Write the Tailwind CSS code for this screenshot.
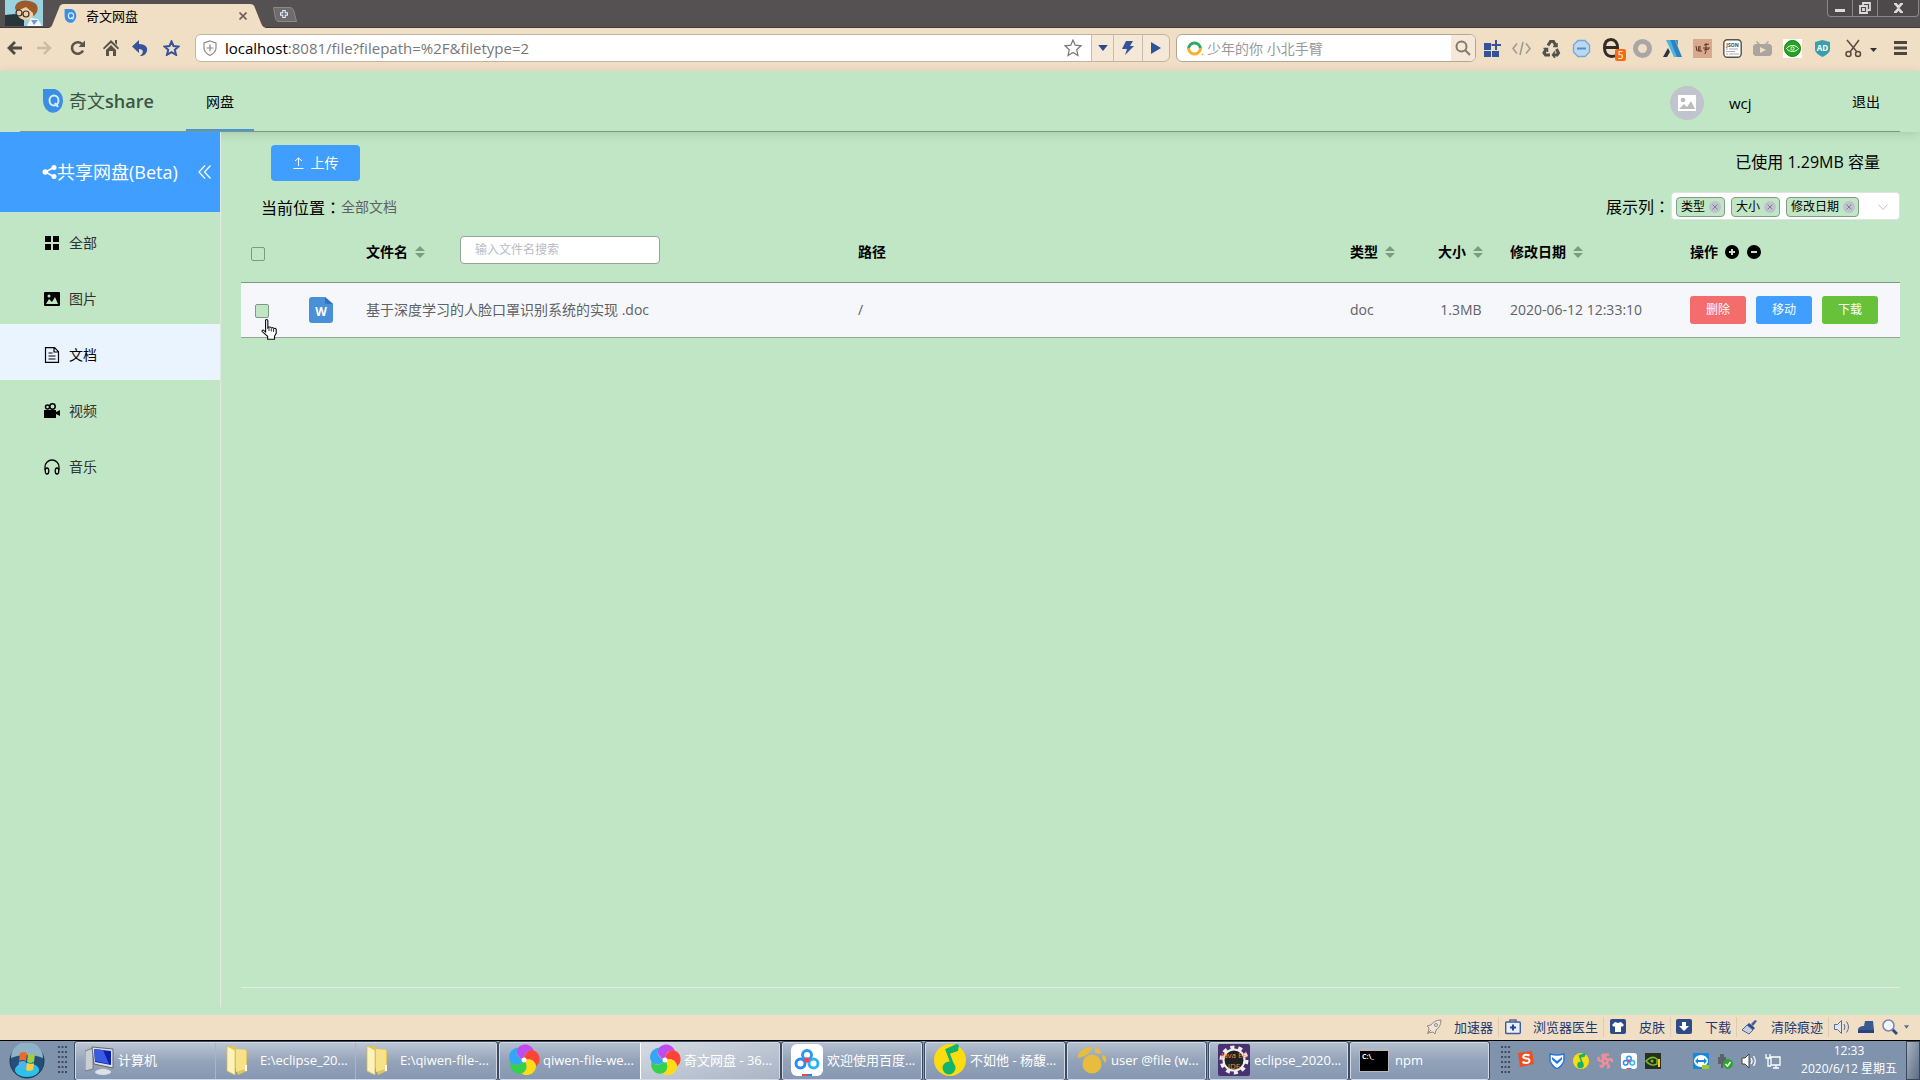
<!DOCTYPE html>
<html lang="zh-CN">
<head>
<meta charset="utf-8">
<title>奇文网盘</title>
<script src="https://cdn.jsdelivr.net/npm/@tailwindcss/browser@4"></script>
</head>
<body class="h-screen flex flex-col overflow-hidden bg-[#c1e6c5] font-['Open_Sans','Noto_Sans_CJK_SC',sans-serif] text-sm leading-5 text-black">

<svg class="hidden">
  <defs>
    <symbol id="pinwheel" viewBox="0 0 32 32">
      <path id="petal" d="M16 16C9 14 6 6 12 2c5-3.500 12-1 14 5-6-2-10 2-10 9z" fill="#c04cf0"/>
      <path d="M16 16C9 14 6 6 12 2c5-3.500 12-1 14 5-6-2-10 2-10 9z" fill="#ff4338" transform="rotate(72 16 16)"/>
      <path d="M16 16C9 14 6 6 12 2c5-3.500 12-1 14 5-6-2-10 2-10 9z" fill="#ffdc14" transform="rotate(144 16 16)"/>
      <path d="M16 16C9 14 6 6 12 2c5-3.500 12-1 14 5-6-2-10 2-10 9z" fill="#35d04c" transform="rotate(216 16 16)"/>
      <path d="M16 16C9 14 6 6 12 2c5-3.500 12-1 14 5-6-2-10 2-10 9z" fill="#34a6f5" transform="rotate(288 16 16)"/>
      <circle cx="16" cy="16" r="2.500" fill="#fff"/>
    </symbol>
    <symbol id="folder" viewBox="0 0 24 32">
      <path d="M2 2h8l2 3h8l2 2v20l-9 4z" fill="#e3c55c"/>
      <path d="M11 5l10 1v19l-10 3z" fill="#f6e28b"/>
      <path d="M2 2l8 4v25l-8-4z" fill="#fdf3b8" stroke="#d8b84c" stroke-width=".7"/>
      <path d="M21 21v6" stroke="#fff" stroke-width="2"/>
    </symbol>
    <symbol id="netdisk" viewBox="0 0 32 32">
      <rect width="32" height="32" rx="6" fill="#fff"/>
      <g fill="none" stroke-width="3"><circle cx="9.500" cy="19.500" r="4.500" stroke="#2a8bf0"/><circle cx="22.500" cy="19.500" r="4.500" stroke="#2fb4f5"/><circle cx="16" cy="11" r="4.500" stroke="#2a9bf0"/></g>
      <circle cx="16" cy="16" r="2.800" fill="#f0465a"/>
      <path d="M11 30h5v2h-5z" fill="#e8485c"/><path d="M16 30h5v2h-5z" fill="#2d7ff0"/>
    </symbol>
    <symbol id="music" viewBox="0 0 32 32">
      <circle cx="16" cy="16" r="16" fill="#fbdc10"/>
      <path d="M24 1l-11 5 6 16" fill="none" stroke="#12b36c" stroke-width="3"/><path d="M25 1l-1 6-9 3-2-5z" fill="#12b36c"/>
      <circle cx="15" cy="24" r="6.500" fill="#12b36c"/>
    </symbol>
    <symbol id="sort" viewBox="0 0 10 12"><path d="M5 0l5 5H0zM5 12l5-5H0z" fill="#7a9d82"/></symbol>
    <symbol id="qlogo" viewBox="0 0 22 24">
      <path d="M0 0h12a10 12 0 1 1-12 12z" fill="#3a8ee6"/>
      <ellipse cx="11" cy="11.500" rx="4.500" ry="5" fill="none" stroke="#d8ecfb" stroke-width="2"/><path d="M12 14l3 4" stroke="#d8ecfb" stroke-width="2"/>
    </symbol>
    <symbol id="grip" viewBox="0 0 9 32">
      <g stroke="#3f4c60" stroke-width="2" stroke-dasharray="2 3"><path d="M1 1v30M4.500 1v30M8 1v30"/></g>
    </symbol>
  </defs>
</svg>

<!-- Browser tab strip -->
<header class="h-7 shrink-0 bg-[#555152] border-b border-[#3f3b3a] flex items-start justify-between">
  <div class="flex items-start h-full">
    <svg class="w-[38px] h-[26px] ml-[5px]" viewBox="0 0 38 26">
      <rect width="38" height="26" fill="#9bd2df"/><path d="M0 26V15l10-1 9 6v6z" fill="#26363a"/>
      <path d="M10 8c0-6 8-9 14-7 7 1 10 5 8 11l-3 4-8-7-9 4z" fill="#9a5a2a"/>
      <path d="M12 11l9-4 7 6c0 4-2 7-7 7-6 0-9-4-9-9z" fill="#f3cfa6"/>
      <g fill="none" stroke="#333" stroke-width="1.200"><circle cx="14" cy="13" r="3"/><circle cx="21" cy="14" r="3"/></g>
      <path d="M22 26l4-8 7 1 4 7z" fill="#f3f7fb"/><path d="M26 20l3 5 4-5z" fill="#6c9ad4"/>
    </svg>
    <div class="relative h-6 w-[224px] mt-1 ml-[4px]">
      <svg class="absolute inset-0 w-full h-full" viewBox="0 0 224 24" preserveAspectRatio="none"><path d="M0 24c4 0 5-2 6-5l6-15c1-3 2-4 5-4h186c3 0 4 1 5 4l6 15c1 3 3 5 7 5z" fill="#f0dec5"/></svg>
      <div class="relative flex items-center h-full pl-[17px] pr-[24px]">
        <svg class="w-[14px] h-[14px]"><use href="#qlogo"/></svg>
        <span class="ml-2 text-[13px] flex-1">奇文网盘</span>
        <button aria-label="关闭标签页"><svg class="w-2 h-2" viewBox="0 0 8 8"><path d="M.5.5l7 7M7.500.5l-7 7" stroke="#6f6359" stroke-width="1.700"/></svg></button>
      </div>
    </div>
    <button aria-label="新标签页" class="mt-[7px] ml-px"><svg class="w-[25px] h-[15px]" viewBox="0 0 25 15"><path d="M1.500.5H17c3 0 4 1 5 4l2.500 10H7c-2 0-3-1-3.500-3z" fill="#6f6c6d" stroke="#8c898a"/><path d="M12 3v8M8 7h8" stroke="#e8eaf0" stroke-width="3.500"/><path d="M12 4v6M9 7h6" stroke="#4a5a78" stroke-width="1.200"/></svg></button>
  </div>
  <div class="flex h-[17px] mr-px border border-t-0 border-[#8b8788] rounded-b text-[#dcdada] bg-[#4d494a]">
    <button aria-label="最小化" class="w-6 flex justify-center items-center"><svg class="w-3 h-3" viewBox="0 0 12 12"><path d="M1 7h10v3H1z" fill="currentColor"/></svg></button>
    <button aria-label="还原" class="w-[26px] flex justify-center items-center border-x border-[#8b8788]"><svg class="w-3 h-3" viewBox="0 0 12 12" fill="none" stroke="currentColor" stroke-width="1.800"><path d="M4 3V1h7v7H9"/><path d="M1 4h7v7H1zM4 7h1v1H4z"/></svg></button>
    <button aria-label="关闭" class="w-10 flex justify-center items-center"><svg class="w-[11px] h-[10px]" viewBox="0 0 11 10"><path d="M1 .8h2.300l2.200 2.700L7.700.8H10M1 9.200h2.300l2.200-2.700 2.200 2.700H10M2 1l7 8M9 1L2 9" stroke="currentColor" stroke-width="1.600" fill="none"/></svg></button>
  </div>
</header>

<!-- Browser toolbar -->
<nav class="h-[43px] shrink-0 bg-[#f0dec5] flex items-center pb-[3px] pl-[7px] pr-[13px]" aria-label="浏览器工具栏">
  <div class="flex items-center w-[188px] shrink-0 text-[#5a534c]">
    <button aria-label="后退" class="w-[29px]"><svg class="w-4 h-4" viewBox="0 0 16 16" fill="none" stroke="#4e4a45" stroke-width="2.800"><path d="M8 2L2 8l6 6M2 8h13"/></svg></button>
    <button aria-label="前进" class="w-[34px]"><svg class="w-4 h-4" viewBox="0 0 16 16" fill="none" stroke="#cbbba5" stroke-width="2.400"><path d="M8 2l6 6-6 6M14 8H1"/></svg></button>
    <button aria-label="刷新" class="w-[33px]"><svg class="w-4 h-4" viewBox="0 0 16 16"><path d="M13 10.500A5.800 5.800 0 1 1 12 4" fill="none" stroke="currentColor" stroke-width="2.600"/><path d="M15 .5V7H8.500z" fill="currentColor"/></svg></button>
    <button aria-label="主页" class="w-[29px]"><svg class="w-4 h-4" viewBox="0 0 16 16" fill="currentColor"><path d="M8 0l8 8-1 1.500L8 3 1 9.500 0 8zM12 0h2v5l-2-2zM8 5l5 5v6h-3v-5H6v5H3v-6z"/></svg></button>
    <button aria-label="恢复" class="w-[31px]"><svg class="w-4 h-4" viewBox="0 0 16 16"><path d="M7 0v4c6 0 9 3 8 7-1 3-3 5-7 5 4-3 4-7-1-7v4L0 6.500z" fill="#34539a"/></svg></button>
    <button aria-label="收藏"><svg class="w-[17px] h-4" viewBox="0 0 17 16"><path d="M8.500 1.500l2 4.500 5 .5-3.700 3.300 1.200 5-4.500-2.600L4 14.800l1.200-5L1.500 6.500l5-.5z" fill="none" stroke="#34539a" stroke-width="2"/></svg></button>
  </div>
  <div class="flex flex-1 h-7 border border-[#c0b3a2] rounded-md overflow-hidden bg-[#f5e8d7]">
    <div class="flex flex-1 items-center bg-white pl-[7px] pr-[9px]">
      <svg class="w-[14px] h-4 mr-2 shrink-0" viewBox="0 0 14 16" fill="none" stroke="#8a8a8a" stroke-width="1.200"><path d="M7 1l6 2v5c0 4-3 6-6 7.500C4 14 1 12 1 8V3zM7 4.500v7M3.500 8h7"/></svg>
      <div class="relative flex-1 h-6 text-[15px]">
        <input aria-label="地址" value="localhost:8081/file?filepath=%2F&amp;filetype=2" class="block w-full h-6 text-[#777] outline-none">
        <span aria-hidden="true" class="absolute left-0 top-0 leading-6 bg-white text-black">localhost</span>
      </div>
      <button aria-label="收藏此页"><svg class="w-[18px] h-[18px]" viewBox="0 0 18 18"><path d="M9 1l2.200 5.200 5.800.6-4.300 3.900 1.300 5.900L9 13.500l-5 3.100 1.300-5.900L1 6.800l5.800-.6z" fill="none" stroke="#777" stroke-width="1.200"/></svg></button>
    </div>
    <button aria-label="历史地址" class="w-[22px] flex items-center justify-center border-l border-[#c9bcab]"><svg class="w-[10px] h-1.5" viewBox="0 0 8 5"><path d="M0 0h8L4 5z" fill="#2b4a86"/></svg></button>
    <button aria-label="极速模式" class="w-[29px] flex items-center justify-center border-l border-[#c9bcab]"><svg class="w-3 h-[14px]" viewBox="0 0 12 14"><path d="M4 0h7L8 5h4L3 14l2-6H0z" fill="#34539a"/></svg></button>
    <button aria-label="转到" class="w-[27px] flex items-center justify-center border-l border-[#c9bcab]"><svg class="w-[10px] h-3" viewBox="0 0 10 12"><path d="M0 0l10 6-10 6z" fill="#2d5599"/></svg></button>
  </div>
  <div class="flex w-[300px] h-7 ml-[6px] border border-[#b3a696] rounded-md overflow-hidden bg-white shrink-0">
    <div class="flex items-center flex-1 pl-[10px]">
      <svg class="w-[17px] h-[15px] mr-[3px]" viewBox="0 0 17 15" fill="none" stroke-width="3"><path d="M1.500 8a6 6 0 0 1 12 0" stroke="#31a862"/><path d="M13.500 7a6 6 0 0 1-12 0" stroke="#f1b32b"/><circle cx="15.500" cy="13.500" r="1" fill="#f1b32b" stroke="none"/></svg>
      <input aria-label="搜索" placeholder="少年的你 小北手臂" class="flex-1 min-w-0 h-6 text-[14px] placeholder:text-[#999] outline-none">
    </div>
    <button aria-label="开始搜索" class="w-6 flex items-center justify-center bg-[#f5e8d7]"><svg class="w-4 h-4" viewBox="0 0 16 16" fill="none" stroke="#85786c" stroke-width="2"><circle cx="6.500" cy="6.500" r="5"/><path d="M10 10l5 5"/></svg></button>
  </div>
  <div class="flex items-center gap-[11px] ml-[6px] shrink-0">
    <svg class="w-[19px] h-[19px]" viewBox="0 0 19 19" fill="#34539a"><path d="M2 4h7v7H2zM2 12h7v6H2zM10 12h7v6h-7zM13 1h2v4h4v2h-4v4h-2V7H9.500V5H13z"/></svg>
    <svg class="w-[19px] h-[19px]" viewBox="0 0 19 19" fill="none" stroke="#a39a92" stroke-width="1.600"><path d="M5 4.500l-4 5 4 5M14 4.500l4 5-4 5M11 3L8 16"/></svg>
    <svg class="w-[19px] h-[19px]" viewBox="0 0 19 19" fill="none" stroke="#50504e" stroke-width="3"><path d="M6 6.500l2.500-4h3L14 7M14.500 10l2 4-1.500 2h-4M8 16H3.500L2 14l2.500-4.500"/><path d="M11 7.500h4V4M13 12.500L10.500 16l2.500 3M1.500 9.500h4v3.500" stroke-width="1.500"/></svg>
    <svg class="w-[19px] h-[19px]" viewBox="0 0 19 19"><path d="M6 1.500h7l4.500 4.500v7L13 17.500H6L1.500 13V6z" fill="#bcd8f0" stroke="#70a9dd" stroke-width="1.300"/><path d="M5 9.500h9" stroke="#4d90d0" stroke-width="2"/></svg>
    <div class="relative w-[20px] h-[20px]">
      <svg class="w-[18px] h-[20px]" viewBox="0 0 18 20"><path d="M2.500 9.500h13c0-5-2.500-8-6.500-8s-6.500 3-6.500 8.500 3 8.500 7 8.500 5-1 6-2" fill="none" stroke="#312a25" stroke-width="3"/></svg>
      <span class="absolute -right-1 top-[11px] w-[11px] h-3 rounded-xs bg-[#f56c10] text-white text-[10px] leading-3 text-center">5</span>
    </div>
    <svg class="w-[19px] h-[19px]" viewBox="0 0 19 19"><circle cx="9.500" cy="9.500" r="7" fill="none" stroke="#a9a7a5" stroke-width="5"/></svg>
    <svg class="w-[19px] h-[19px]" viewBox="0 0 19 19"><path d="M3 1h4l8 17h-4z" fill="#49b4e6"/><path d="M7 1h5l7 17h-5z" fill="#2f83bd"/><path d="M12 1h3v6z" fill="#3597cf"/><path d="M5 9l2 4-3 5H0z" fill="#2b3440"/></svg>
    <svg class="w-[19px] h-[19px]" viewBox="0 0 19 19"><rect width="19" height="19" fill="#d8a98c"/><path d="M3 7l1 5M6 7l-1 5h4M7 7v5M11 6l5-1M10 9h7M13 4v8l-1 3M11 11l5-1" stroke="#5c3527" fill="none"/></svg>
    <svg class="w-[19px] h-[19px]" viewBox="0 0 19 19"><rect x=".8" y=".8" width="17.400" height="17.400" rx="3.500" fill="#fff" stroke="#55524f" stroke-width="1.400"/><text x="9.500" y="7.500" font-size="5" font-weight="700" text-anchor="middle" fill="#444">JSON</text><path d="M3 10h2m1 0h9M3 12.500h9M3 15h2m1 0h10" stroke="#aaa"/></svg>
    <svg class="w-[19px] h-[19px]" viewBox="0 0 19 19"><path d="M4 2l3 3h5l3-3 1 1-2 2h3l2 2v8l-2 2H2l-2-2V7l2-2h3L3 3z" fill="#a9a5a0"/><path d="M7 8l6 3-6 3z" fill="#f0dec5"/></svg>
    <svg class="w-[19px] h-[19px]" viewBox="0 0 19 19"><rect width="19" height="19" fill="#fff"/><circle cx="9.500" cy="9.500" r="8" fill="#24a51f" stroke="#157a12"/><path d="M3.500 9.500c3-4 9-4 12 0-3 4-9 4-12 0z" fill="none" stroke="#fff"/><circle cx="9.500" cy="9.500" r="1.600" fill="none" stroke="#fff"/></svg>
    <svg class="w-[19px] h-[19px]" viewBox="0 0 19 19"><path d="M9.500 1l7.500 2v7c0 4-4 6-7.500 8C6 16 2 14 2 10V3z" fill="#38a0a8"/><text x="9.500" y="12" font-size="8" font-weight="700" text-anchor="middle" fill="#fff">AD</text></svg>
    <svg class="w-[19px] h-[19px] ml-px" viewBox="0 0 19 19" fill="none" stroke="#5a4a40" stroke-width="1.500"><path d="M3 1l10 12M15 1L6 13"/><circle cx="4.500" cy="15" r="2.500"/><circle cx="14" cy="15" r="2.500"/></svg>
    <svg class="w-[7px] h-1 mt-1 -ml-1" viewBox="0 0 7 4"><path d="M0 0h7L3.500 4z" fill="#333"/></svg>
    <button aria-label="菜单" class="ml-[6px]"><svg class="w-[13px] h-[14px]" viewBox="0 0 13 14"><path d="M0 1.500h13M0 7h13M0 12.500h13" stroke="#4b4641" stroke-width="3"/></svg></button>
  </div>
</nav>

<!-- Application header -->
<header class="relative z-10 shrink-0 h-[61px] px-5 shadow-[0_2px_10px_rgba(0,0,0,0.12)]">
  <div class="h-full border-b border-[#7a9a82] flex items-start justify-between pl-[23px] pr-5">
    <div class="flex h-full">
      <a href="#" class="flex items-center w-[143px] text-lg text-[#3c5544]">
        <svg class="w-[22px] h-6 mr-1"><use href="#qlogo"/></svg><span>奇文</span><span class="font-semibold">share</span>
      </a>
      <a href="#" class="h-[60px] w-[68px] pt-[21px] text-center border-b-2 border-[#4a94d8]">网盘</a>
    </div>
    <div class="flex items-center h-16">
      <svg class="w-[34px] h-[34px]" viewBox="0 0 34 34"><circle cx="17" cy="17" r="17" fill="#c0c4cc"/><rect x="8" y="9" width="18" height="16" fill="#fff"/><circle cx="13" cy="14" r="2.300" fill="#bbb"/><path d="M9 23l5-5 3 3 4-6 4 8z" fill="#bbb"/></svg>
      <span class="ml-[25px] w-[123px] text-[15px]">wcj</span>
      <a href="#" class="pb-0.5">退出</a>
    </div>
  </div>
</header>

<div class="flex flex-1 min-h-0">
  <!-- Category menu -->
  <aside class="relative z-20 w-[221px] shrink-0 mb-2 border-r border-[#e3eae3] bg-[#c1e6c5] text-[#303133]">
    <div class="h-20 bg-[#409eff] text-white text-lg flex items-center pl-[42px]">
      <svg class="w-[15px] h-[14px] shrink-0" viewBox="0 0 14 14"><path d="M12 2L3 7l9 5" fill="none" stroke="#fff" stroke-width="1.500"/><g fill="#fff"><circle cx="11.500" cy="2.500" r="2.500"/><circle cx="2.800" cy="7" r="2.800"/><circle cx="11.500" cy="11.500" r="2.500"/></g></svg>
      <span class="flex-1 whitespace-nowrap">共享网盘(Beta)</span>
      <button aria-label="收起" class="mr-[9px]"><svg class="w-[13px] h-[14px]" viewBox="0 0 13 14" fill="none" stroke="#fff" stroke-width="1.200"><path d="M7 .5L1 7l6 6.500M12.500.5l-6 6.500 6 6.500"/></svg></button>
    </div>
    <ul>
      <li><a href="#" class="flex items-center h-14 pl-11 pt-[5px] gap-[9px]"><svg class="w-4 h-4" viewBox="0 0 16 16"><path d="M1 1h6v6H1zM9 1h6v6H9zM1 9h6v6H1zM9 9h6v6H9z" fill="#000"/></svg>全部</a></li>
      <li><a href="#" class="flex items-center h-14 pl-11 pt-[5px] gap-[9px]"><svg class="w-4 h-4" viewBox="0 0 16 16"><rect y="1" width="16" height="14" rx="1" fill="#000"/><path d="M2 13l3-5 3 3 3-5 3 7z" fill="#c1e6c5"/><circle cx="5" cy="5" r="1.500" fill="#c1e6c5"/></svg>图片</a></li>
      <li><a href="#" class="flex items-center h-14 pl-11 pt-[5px] gap-[9px] bg-[#eaf4ff] text-black"><svg class="w-4 h-4" viewBox="0 0 16 16" fill="none" stroke="#000" stroke-width="1.200"><path d="M1.500.7h9l4 4v10.600h-13zM10 1v4h4M4.500 6h4M4.500 9h7M4.500 12h7"/></svg>文档</a></li>
      <li><a href="#" class="flex items-center h-14 pl-11 pt-[5px] gap-[9px]"><svg class="w-4 h-4" viewBox="0 0 16 16"><path d="M0 7h12v2l4-2v6l-4-2v4H0z" fill="#000"/><circle cx="3.500" cy="4" r="2" fill="none" stroke="#000" stroke-width="1.500"/><circle cx="8.500" cy="3.500" r="2.700" fill="none" stroke="#000" stroke-width="1.500"/></svg>视频</a></li>
      <li><a href="#" class="flex items-center h-14 pl-11 pt-[5px] gap-[9px]"><svg class="w-4 h-4" viewBox="0 0 16 16" fill="none" stroke="#000" stroke-width="1.300"><path d="M1 11V8a7 7 0 0 1 14 0v3"/><ellipse cx="3" cy="12" rx="1.800" ry="3"/><ellipse cx="13" cy="12" rx="1.800" ry="3"/></svg>音乐</a></li>
    </ul>
  </aside>

  <!-- File list -->
  <main class="flex-1 min-w-0 flex flex-col pl-5 pr-5 pb-[27px]">
    <div class="flex items-center justify-between pt-[13px] pl-[30px] pr-5">
      <button class="h-9 w-[89px] rounded bg-[#409eff] text-white flex items-center justify-center gap-[7px]"><svg class="w-[11px] h-3" viewBox="0 0 11 12" fill="none" stroke="#fff"><path d="M5.500 9V1M2 4l3.500-3L9 4M.5 11.500h10"/></svg>上传</button>
      <span class="text-base leading-5 pb-0.5">已使用 1.29MB 容量</span>
    </div>
    <div class="flex items-center justify-between h-7 mt-[11px] pl-5">
      <div class="flex items-center pt-0.5"><span class="text-base leading-5">当前位置<span class="font-['Noto_Sans_CJK_TC',sans-serif]" lang="zh-TW">：</span></span><a href="#" class="text-[#606266]">全部文档</a></div>
      <div class="flex items-center">
        <span class="text-base leading-5 mr-px">展示列<span class="font-['Noto_Sans_CJK_TC',sans-serif]" lang="zh-TW">：</span></span>
        <div class="flex items-center gap-[6px] w-[229px] h-7 rounded border border-[#e0e4e0] bg-white pl-1 pt-px text-xs" role="group" aria-label="展示列">
          <span class="flex items-center h-5 border border-[#7d9f85] rounded bg-[#c1e6c5] pl-1 pr-[3px] gap-1">类型<button aria-label="移除类型" class="w-3 h-3 rounded-full bg-[#bfc3cb] flex items-center justify-center"><svg class="w-1.5 h-1.5" viewBox="0 0 6 6" stroke="#7d7f92"><path d="M.5.5l5 5M5.500.5l-5 5"/></svg></button></span>
          <span class="flex items-center h-5 border border-[#7d9f85] rounded bg-[#c1e6c5] pl-1 pr-[3px] gap-1">大小<button aria-label="移除大小" class="w-3 h-3 rounded-full bg-[#bfc3cb] flex items-center justify-center"><svg class="w-1.5 h-1.5" viewBox="0 0 6 6" stroke="#7d7f92"><path d="M.5.5l5 5M5.500.5l-5 5"/></svg></button></span>
          <span class="flex items-center h-5 border border-[#7d9f85] rounded bg-[#c1e6c5] pl-1 pr-[3px] gap-1">修改日期<button aria-label="移除修改日期" class="w-3 h-3 rounded-full bg-[#bfc3cb] flex items-center justify-center"><svg class="w-1.5 h-1.5" viewBox="0 0 6 6" stroke="#7d7f92"><path d="M.5.5l5 5M5.500.5l-5 5"/></svg></button></span>
          <button aria-label="展开" class="ml-auto mr-[11px]"><svg class="w-[10px] h-[6px]" viewBox="0 0 10 6" fill="none" stroke="#c0c4cc"><path d="M.5.5L5 5.500 9.500.5"/></svg></button>
        </div>
      </div>
    </div>
    <div class="flex-1 border-b border-[#e3ebe3] pt-[2px]">
      <table class="w-full table-fixed text-left border-collapse">
        <colgroup><col class="w-[50px]"><col class="w-[65px]"><col><col><col class="w-[88px]"><col class="w-[72px]"><col class="w-[180px]"><col class="w-[220px]"></colgroup>
        <thead>
          <tr class="h-[60px] font-bold border-b border-[#7a9a82]">
            <th class="pl-[10px]"><input type="checkbox" aria-label="全选" class="block appearance-none w-[14px] h-[14px] mt-1 border border-[#7a9a82] rounded-xs"></th>
            <th></th>
            <th class="pl-[10px]"><div class="flex items-center"><button class="flex items-center gap-[7px] font-bold">文件名<svg class="w-[10px] h-3"><use href="#sort"/></svg></button><input aria-label="搜索文件名" placeholder="输入文件名搜索" class="ml-[35px] mb-1 w-[200px] h-7 px-[14px] rounded border border-[#93a596] bg-white text-xs font-normal placeholder:text-[#b9bcc4]"></div></th>
            <th class="pl-[10px]">路径</th>
            <th class="pl-[10px]"><button class="flex items-center gap-[7px] font-bold">类型<svg class="w-[10px] h-3"><use href="#sort"/></svg></button></th>
            <th class="pl-[10px]"><button class="flex items-center gap-[7px] font-bold">大小<svg class="w-[10px] h-3"><use href="#sort"/></svg></button></th>
            <th class="pl-[10px]"><button class="flex items-center gap-[7px] font-bold">修改日期<svg class="w-[10px] h-3"><use href="#sort"/></svg></button></th>
            <th class="pl-[10px]"><div class="flex items-center gap-2"><span class="-mr-px">操作</span>
              <button aria-label="展开操作列"><svg class="w-[14px] h-[14px] block" viewBox="0 0 14 14"><circle cx="7" cy="7" r="7"/><path d="M7 4v6M4 7h6" stroke="#c1e6c5" stroke-width="2"/></svg></button>
              <button aria-label="收起操作列"><svg class="w-[14px] h-[14px] block" viewBox="0 0 14 14"><circle cx="7" cy="7" r="7"/><path d="M4 7h6" stroke="#c1e6c5" stroke-width="2"/></svg></button></div></th>
          </tr>
        </thead>
        <tbody>
          <tr class="h-[55px] bg-[#f5f7fa] border-b border-[#98a39b] text-[#606266]">
            <td class="pl-[14px] relative">
              <input type="checkbox" aria-label="选择文件" class="block appearance-none w-[14px] h-[14px] mt-[2px] border border-[#7a9a82] rounded-xs bg-[#c1e6c5]">
              <svg class="absolute left-[20px] top-[36px] w-4 h-[22px] z-10" viewBox="0 0 14 22" preserveAspectRatio="none"><path d="M4 1c1-1 2 0 2 1v7l1-1 1 0 1 1 1-.5 1.500 1 1-.2.8 1v4l-1.500 3v3h-6v-3L1 12.500c-.5-1.500 1-2 2-.5l1 1z" fill="#fff" stroke="#111" stroke-width="1"/><path d="M7 9v3M9 9.500v3M11 10v3" stroke="#111" stroke-width=".8"/></svg>
            </td>
            <td class="pl-[18px]"><svg class="w-6 h-[26px]" viewBox="0 0 24 26"><path d="M3 0h13l8 7v16c0 2-1 3-3 3H3c-2 0-3-1-3-3V3c0-2 1-3 3-3z" fill="#4a90d9"/><path d="M16 0l8 7h-6c-1 0-2-1-2-2z" fill="#2f72bd"/><text x="12" y="19" font-size="12" font-weight="700" text-anchor="middle" fill="#fff">W</text></svg></td>
            <td class="pl-[10px] whitespace-nowrap">基于深度学习的人脸口罩识别系统的实现 .doc</td>
            <td class="pl-[10px]">/</td>
            <td class="pl-[10px]">doc</td>
            <td class="text-center pr-[6px]">1.3MB</td>
            <td class="pl-[10px] whitespace-nowrap">2020-06-12 12:33:10</td>
            <td class="pl-[10px]"><div class="flex gap-[10px] text-xs text-white"><button class="w-14 h-7 rounded-[3px] bg-[#f56c6c]">删除</button><button class="w-14 h-7 rounded-[3px] bg-[#409eff]">移动</button><button class="w-14 h-7 rounded-[3px] bg-[#67c23a]">下载</button></div></td>
          </tr>
        </tbody>
      </table>
    </div>
  </main>
</div>

<!-- Browser status bar -->
<footer class="h-[25px] shrink-0 bg-[#f0dec5] flex items-center justify-end pr-[11px] pb-0.5 text-[13px] text-[#1c3874]">
  <button class="flex items-center gap-3 pr-[5px] mr-[6px] border-r border-[#ddccb5]"><svg class="w-4 h-4" viewBox="0 0 16 16" fill="#eee6dc" stroke="#95897c"><path d="M15 1c-5 0-8 2-10 5L1 7l2 2-1 5 5-1 2 2 1-4c3-2 5-5 5-10zM1 15l4-4"/><circle cx="10" cy="6" r="1.500"/></svg>加速器</button>
  <button class="flex items-center gap-3 pr-[5px] mr-[6px] border-r border-[#ddccb5]"><svg class="w-4 h-4" viewBox="0 0 16 16"><path d="M5 3V1h6v2" fill="none" stroke="#5a6a8c" stroke-width="1.500"/><rect x=".7" y="3" width="14.600" height="11.500" rx="1" fill="#e8eefb" stroke="#3f5a94" stroke-width="1.400"/><path d="M8 5.500v6M5 8.500h6" stroke="#24468f" stroke-width="2"/></svg>浏览器医生</button>
  <button class="flex items-center gap-[13px] pr-[5px] mr-[5px] border-r border-[#ddccb5]"><svg class="w-4 h-4" viewBox="0 0 16 16"><rect width="16" height="15" rx="2" fill="#2d4b86"/><path d="M5 3l3 1 3-1 3 3-2 2-1-1v6H5V7L4 8 2 6z" fill="#fff"/></svg>皮肤</button>
  <button class="flex items-center gap-[13px] pr-[5px] mr-[5px] border-r border-[#ddccb5]"><svg class="w-4 h-4" viewBox="0 0 16 16"><rect width="16" height="15" rx="2" fill="#2d4b86"/><path d="M6 3h4v4h3l-5 5-5-5h3z" fill="#fff"/></svg>下载</button>
  <button class="flex items-center gap-[13px] pr-[5px] mr-[5px] border-r border-[#ddccb5]"><svg class="w-4 h-4" viewBox="0 0 16 16"><path d="M9 5l4-4 2 1-4 5z" fill="#3f5f9c"/><path d="M7 4l6 5-2 2-6-5z" fill="#2d4b86"/><path d="M5 6l6 5-4 4-7-4z" fill="#c8d0e0" stroke="#4a6496"/></svg>清除痕迹</button>
  <div class="flex items-center gap-2">
    <svg class="w-4 h-[14px]" viewBox="0 0 16 14" fill="#dfe6f2" stroke="#5a6c92"><path d="M.5 4.500h3l4-4v13l-4-4h-3z"/><path d="M10 4q2 3 0 6M12.500 1.500q4 5.500 0 11" fill="none"/></svg>
    <svg class="w-4 h-3" viewBox="0 0 16 12"><path d="M7 0h8l1 9H0c0-3 3-4 6-4z" fill="#3c5891"/><path d="M0 9h16v3H0z" fill="#27427c"/></svg>
    <svg class="w-4 h-4" viewBox="0 0 16 16"><path d="M10 10l5 5" stroke="#2d4b86" stroke-width="3"/><circle cx="6.500" cy="6.500" r="5.500" fill="#f2f7ff" stroke="#7788a8" stroke-width="1.500"/></svg>
    <svg class="w-[5px] h-1 -ml-0.5" viewBox="0 0 6 4"><path d="M0 0h6L3 4z" fill="#5a6c92"/></svg>
  </div>
</footer>

<!-- Desktop taskbar -->
<footer class="h-10 shrink-0 bg-[#8093ac] border-t border-black flex items-center text-[13px] text-white">
  <button aria-label="开始" class="ml-[9px] mr-[13px] shrink-0"><svg class="w-9 h-9 block" viewBox="0 0 36 36"><circle cx="18" cy="18" r="17" fill="#244f78" stroke="#1e3450"/><ellipse cx="18" cy="27" rx="12" ry="7" fill="#2cc0ea"/><path d="M2 15a16 16 0 0 1 32 0c-9-4-23-4-32 0z" fill="#8fb2c6"/><path d="M11 10q4-2 7 0l-1 8q-4-2-7 0z" fill="#ee6a2c"/><path d="M19 11q4 2 7 0l-1 8q-4 2-7 0z" fill="#9ccf42"/><path d="M10 19q4-2 7 0l-1 7q-4-2-7 0z" fill="#4fb4ee"/><path d="M18 20q4 2 7 0l-1 7q-4 2-7 0z" fill="#fbce3e"/></svg></button>
  <svg class="w-[9px] h-8 mr-2 shrink-0"><use href="#grip"/></svg>

  <div class="flex h-[38px] border border-[#d3dae4] rounded-xs bg-linear-to-b from-[#bcc6d4] via-[#95a4ba] to-[#8597b2] outline outline-[#3d4b60]">
    <button class="w-[140px] flex items-center pl-[9px] pb-0.5 border-r border-[#a9b5c6]"><svg class="w-[30px] h-8 mr-[3px]" viewBox="0 0 30 32"><path d="M0 7l8-3v21l-8 2z" fill="#c9ced3" stroke="#555" stroke-width=".6"/><path d="M7 3l21 2v19L9 20z" fill="#dde3e8" stroke="#666"/><path d="M9 5l17 2v14l-16-3z" fill="#0b1fb4"/><path d="M9 5l9 1 6 14-14-3z" fill="#3a5be0"/><path d="M16 23l5 1v3l-6-1z" fill="#aaa"/><ellipse cx="18" cy="28" rx="8" ry="3" fill="#dfe2e5"/></svg><span>计算机</span></button>
    <button class="w-[140px] flex items-center pl-[9px] pb-0.5 border-r border-[#a9b5c6]"><svg class="w-6 h-8 mr-[11px] shrink-0"><use href="#folder"/></svg><span>E:\eclipse_20...</span></button>
    <button class="w-[140px] flex items-center pl-[9px] pb-0.5"><svg class="w-6 h-8 mr-[11px] shrink-0"><use href="#folder"/></svg><span>E:\qiwen-file-...</span></button>
  </div>
  <div class="flex h-[38px] ml-[2px] border border-[#d3dae4] rounded-xs bg-linear-to-b from-[#b4bfce] via-[#93a2b9] to-[#8597b2] outline outline-[#3d4b60]">
    <button class="w-[140px] flex items-center pl-2 pb-0.5 whitespace-nowrap"><svg class="w-8 h-8 mr-[3px] shrink-0"><use href="#pinwheel"/></svg><span>qiwen-file-we...</span></button>
    <button class="w-[139px] flex items-center pl-2 pb-0.5 whitespace-nowrap bg-linear-to-br from-[#d5dbe3] to-[#a9b4c5] border-l border-white"><svg class="w-8 h-8 mr-[3px] shrink-0"><use href="#pinwheel"/></svg><span>奇文网盘 - 36...</span></button>
  </div>
  <button class="w-[140px] h-[38px] ml-[2px] flex items-center pl-2 pb-0.5 whitespace-nowrap border border-[#d3dae4] rounded-xs bg-linear-to-b from-[#b4bfce] via-[#93a2b9] to-[#8597b2] outline outline-[#3d4b60]"><svg class="w-8 h-8 mr-1 shrink-0"><use href="#netdisk"/></svg><span>欢迎使用百度...</span></button>
  <button class="w-[140px] h-[38px] ml-[3px] flex items-center pl-2 pb-0.5 whitespace-nowrap border border-[#d3dae4] rounded-xs bg-linear-to-b from-[#b4bfce] via-[#93a2b9] to-[#8597b2] outline outline-[#3d4b60]"><svg class="w-8 h-8 mr-1 shrink-0"><use href="#music"/></svg><span>不如他 - 杨馥...</span></button>
  <button class="w-[139px] h-[38px] ml-[2px] flex items-center pl-[9px] pb-0.5 whitespace-nowrap border border-[#d3dae4] rounded-xs bg-linear-to-b from-[#b4bfce] via-[#93a2b9] to-[#8597b2] outline outline-[#3d4b60]"><svg class="w-[30px] h-7 mr-1 shrink-0" viewBox="0 0 30 28" fill="#e8bc3c"><circle cx="15" cy="18" r="9.500"/><path d="M1 12C0 6 8 0 15 1c-1 6-6 9-14 11zM18 1c4 0 6 4 6 7l-6-1zM26 9c4 1 4 6 2 8l-3-5z"/></svg><span>user @file (w...</span></button>
  <button class="w-[139px] h-[38px] ml-[3px] flex items-center pl-2 pb-0.5 whitespace-nowrap border border-[#d3dae4] rounded-xs bg-linear-to-b from-[#b4bfce] via-[#93a2b9] to-[#8597b2] outline outline-[#3d4b60]"><svg class="w-8 h-8 mr-1 shrink-0" viewBox="0 0 32 32"><rect width="32" height="32" rx="2" fill="#49306e"/><circle cx="16" cy="16" r="12.500" fill="none" stroke="#eee" stroke-width="4" stroke-dasharray="4 3.850"/><circle cx="16" cy="16" r="10.500" fill="#222" stroke="#eee" stroke-width="2"/><text x="16" y="14" font-size="8" text-anchor="middle" fill="#ff8d2e">Java EE</text><text x="16" y="25" font-size="8" text-anchor="middle" fill="#ff8d2e">IDE</text></svg><span>eclipse_2020...</span></button>
  <button class="w-[139px] h-[38px] ml-[2px] flex items-center pl-2 pb-0.5 whitespace-nowrap border border-[#d3dae4] rounded-xs bg-linear-to-b from-[#b4bfce] via-[#93a2b9] to-[#8597b2] outline outline-[#3d4b60]"><svg class="w-[30px] h-6 mr-[6px] shrink-0" viewBox="0 0 30 24"><rect width="30" height="24" fill="#b5b8bd"/><rect x="1" y="3" width="28" height="20"/><text x="3" y="11" font-size="7" font-weight="700" fill="#fff">C:\_</text></svg><span>npm</span></button>

  <svg class="w-[9px] h-8 ml-3 mr-2 shrink-0"><use href="#grip"/></svg>
  <div class="flex items-center gap-2 shrink-0">
    <svg class="w-4 h-4 mb-1 mr-[7px]" viewBox="0 0 16 16"><path d="M0 2l14-2 2 13-14 3z" fill="#ef4e1e"/><path d="M11.500 4.500c-4-2-7 0-6 2s6 0 6 3-4 3-7 1.500" fill="none" stroke="#fff" stroke-width="2"/></svg>
    <svg class="w-4 h-4" viewBox="0 0 16 16"><path d="M1 1q7 2 14 0v7q-2 5-7 8-5-3-7-8z" fill="#fff" stroke="#2476d8" stroke-width="1.500"/><path d="M3 4l5 4 5-4v2.500L8 11 3 6.500z" fill="#2476d8"/></svg>
    <svg class="w-4 h-4"><use href="#music"/></svg>
    <svg class="w-4 h-4" viewBox="0 0 16 16" fill="none" stroke="#f08e98" stroke-width="2.500"><circle cx="8" cy="8" r="2.500"/><path d="M8 5q0-5 4-3M11 7q5-2 4 2M10 11q4 3 0 4M7 11q-2 5-4 1M5 8Q0 8 2 4M6 5Q4 1 8 2"/></svg>
    <svg class="w-4 h-4"><use href="#netdisk"/></svg>
    <svg class="w-4 h-4" viewBox="0 0 16 16"><rect width="16" height="16" fill="#26301c"/><path d="M1 8q6-6 11-2v5q-6 3-11-3z" fill="none" stroke="#78b82b" stroke-width="1.500"/><circle cx="7" cy="8" r="1.500" fill="#78b82b"/><path d="M13 6h2v8h-2z" fill="#ffc928"/></svg>
    <svg class="w-4 h-4 ml-6" viewBox="0 0 16 16"><rect width="16" height="16" rx="1" fill="#1687dd"/><ellipse cx="8" cy="8" rx="7" ry="6" fill="#fff"/><path d="M2 8l3-3v2h6V5l3 3-3 3V9H5v2z" fill="#1687dd"/><path d="M9 12h7v4H9z" fill="#95cf2f"/></svg>
    <svg class="w-4 h-4" viewBox="0 0 16 16"><path d="M1 4h8v7H6v4H4v-4H1zM3 1h4v3H3z" fill="#5c6268"/><circle cx="11" cy="11" r="5" fill="#2ca52f"/><path d="M8.500 11l2 2 3-4" fill="none" stroke="#fff" stroke-width="1.500"/></svg>
    <svg class="w-4 h-4" viewBox="0 0 16 16"><path d="M1 5h3l4-4v14l-4-4H1z" fill="#fff" stroke="#444"/><path d="M10 5q2 3 0 6M12.500 3q3.500 5 0 10" fill="none" stroke="#fff" stroke-width="1.300"/></svg>
    <svg class="w-4 h-4" viewBox="0 0 16 16" fill="none" stroke="#fff" stroke-width="1.300"><path d="M6 4h9v8H6zM8 15h6M11 12v3M1 1v4h4V1M3 5v8h3" /></svg>
  </div>
  <div class="ml-auto mr-[9px] pb-0.5 text-center text-xs leading-[18px] whitespace-nowrap shrink-0"><div>12:33</div><div>2020/6/12 星期五</div></div>
  <button aria-label="显示桌面" class="w-[14px] h-full shrink-0 border border-[#3c4858] bg-linear-to-br from-[#aab5c4] to-[#5d6d84]"></button>
</footer>
</body>
</html>
